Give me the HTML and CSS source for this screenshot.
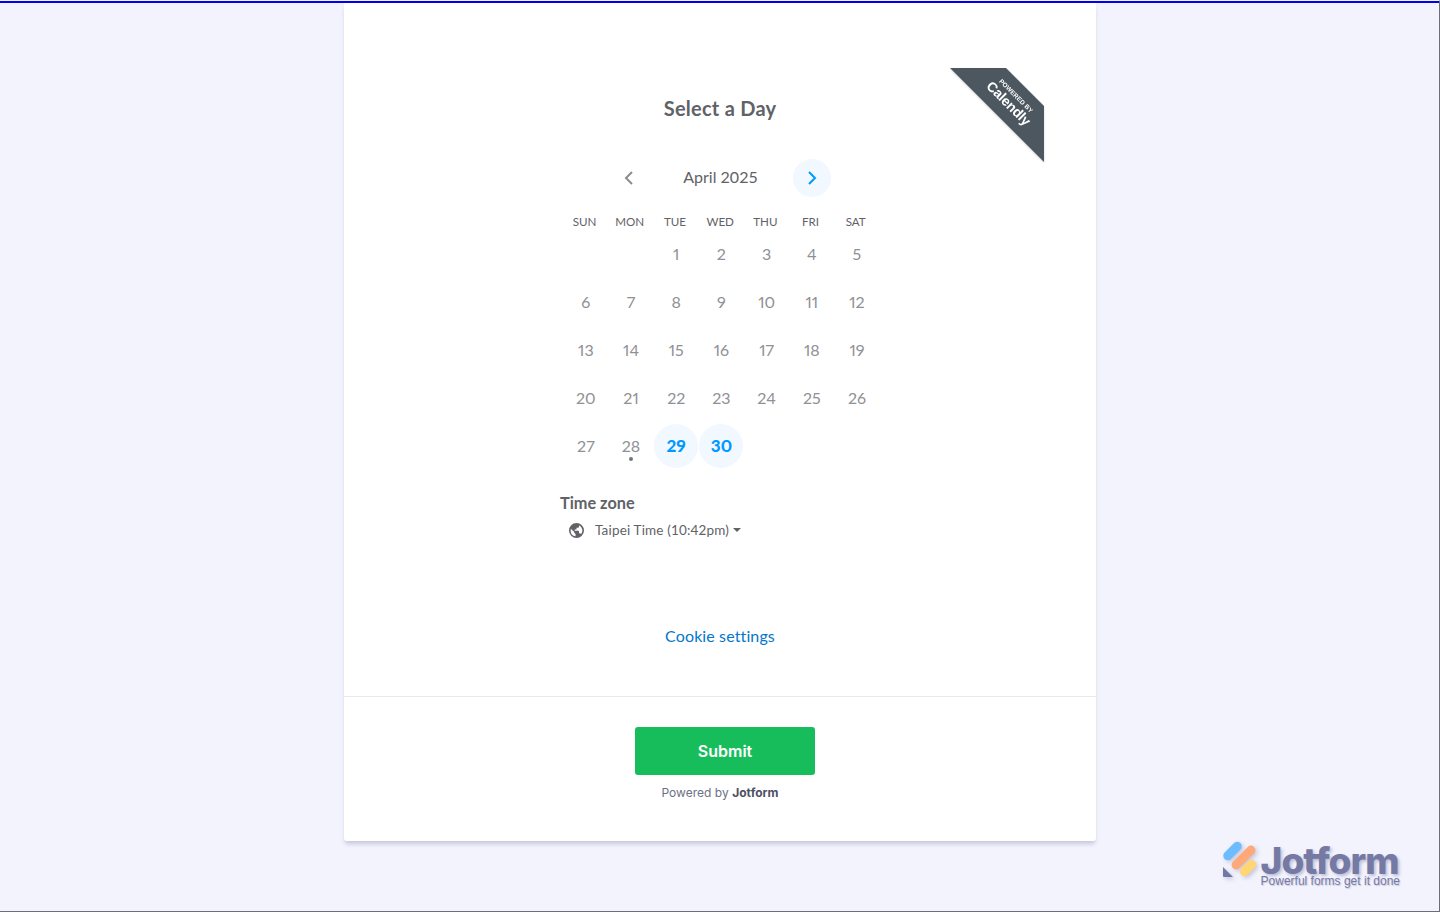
FILE: index.html
```html
<!DOCTYPE html>
<html lang="en">
<head>
<meta charset="utf-8">
<title>Select a Day</title>
<link rel="stylesheet" href="styles.css">
</head>
<body>
<div class="topline"></div>
<main class="card">
  <section class="embed">
    <div class="ribbon" aria-label="Powered by Calendly">
      <svg class="ribbon-bg" width="94" height="94" viewBox="0 0 94 94"><path d="M0 0H56L94 38V94Z" fill="#4d5760"/></svg>
      <div class="ribbon-text"><span class="rib-small">POWERED BY</span><span class="rib-big">Calendly</span></div>
    </div>
    <h1 class="title">Select a Day</h1>
    <div class="month-nav">
      <button class="nav-btn" aria-label="Previous month">
        <svg width="10" height="14" viewBox="0 0 10 14"><path d="M8 1L2 7l6 6" fill="none" stroke="#8a8c90" stroke-width="2"/></svg>
      </button>
      <span class="month">April 2025</span>
      <button class="nav-btn active" aria-label="Next month">
        <svg width="10" height="14" viewBox="0 0 10 14"><path d="M2 1l6 6-6 6" fill="none" stroke="#0099ff" stroke-width="2"/></svg>
      </button>
    </div>
    <div class="weekdays">
      <span>SUN</span><span>MON</span><span>TUE</span><span>WED</span><span>THU</span><span>FRI</span><span>SAT</span>
    </div>
    <div class="days">
      <span></span><span></span><span>1</span><span>2</span><span>3</span><span>4</span><span>5</span>
      <span>6</span><span>7</span><span>8</span><span>9</span><span>10</span><span>11</span><span>12</span>
      <span>13</span><span>14</span><span>15</span><span>16</span><span>17</span><span>18</span><span>19</span>
      <span>20</span><span>21</span><span>22</span><span>23</span><span>24</span><span>25</span><span>26</span>
      <span>27</span><span class="today">28</span><span class="open">29</span><span class="open">30</span>
    </div>
    <div class="tz">
      <h2 class="tz-title">Time zone</h2>
      <div class="tz-row">
        <svg class="globe" width="15" height="15" viewBox="0 0 24 24"><path fill="#5f6267" d="M12 0a12 12 0 1 0 0 24 12 12 0 0 0 0-24zM2.600 12c0-1 .2-2 .5-2.900L5 11l2 2 1 .4.4 2 2.100 2.100v3.800A9.400 9.400 0 0 1 2.600 12zm16.500 6.100c-.3-.9-1.100-1.600-2.100-1.600h-1v-3c0-.6-.4-1-1-1H9v-2h2c.6 0 1-.4 1-1V7.500h2c1.100 0 2-.9 2-2v-2a9.400 9.400 0 0 1 3.100 14.600z"/></svg>
        <span class="tz-label">Taipei Time (10:42pm)</span>
        <span class="caret"></span>
      </div>
    </div>
    <a class="cookie" href="#">Cookie settings</a>
  </section>
  <footer class="foot">
    <button class="submit">Submit</button>
    <p class="powered">Powered by <b>Jotform</b></p>
  </footer>
</main>
<div class="brand">
  <svg class="brand-mark" width="38" height="38" viewBox="0 0 38 38">
    <rect x="0.300" y="5.500" width="22.400" height="9" rx="4.500" fill="#6cbcff" transform="rotate(-45 11.500 10)"/>
    <rect x="7.500" y="12" width="30" height="9" rx="4.500" fill="#ffa878" transform="rotate(-45 22.500 16.500)"/>
    <rect x="17.500" y="22.500" width="19" height="9" rx="4.500" fill="#ffd671" transform="rotate(-45 27 27)"/>
    <path d="M2 26V35a1 1 0 0 0 1 1h9z" fill="#7277a4"/>
  </svg>
  <div class="brand-text">
    <span class="brand-name">Jotform</span>
    <span class="brand-tag">Powerful forms get it done</span>
  </div>
</div>
</body>
</html>
```
FILE: styles.css
```css
* { box-sizing: border-box; }
html, body { margin: 0; height: 912px; overflow: hidden; }
body {
  background: #f3f3fe;
  border-top: 1px solid #f3f3fe;
  border-right: 1px solid #6d6d75;
  border-bottom: 1px solid #6d6d75;
  font-family: "Lato", "Liberation Sans", sans-serif;
  position: relative;
}
.topline { height: 2px; background: #0000ee; margin-right: -1px; }
.card {
  width: 752px;
  height: 838px;
  margin-left: 344px;
  background: #fff;
  border-radius: 0 0 3px 3px;
  box-shadow: 0 4px 4px -1px rgba(87, 90, 130, .28);
  display: flex;
  flex-direction: column;
}
.embed {
  height: 693px;
  position: relative;
  z-index: 0;
  display: flex;
  flex-direction: column;
  align-items: center;
}
.ribbon { position: absolute; left: 606px; top: 65px; width: 94px; height: 94px; filter: drop-shadow(0 1px 1px rgba(0,0,0,.15)); }
.ribbon-bg { display: block; }
.ribbon-text {
  position: absolute;
  left: 25px;
  top: 22px;
  width: 72px;
  display: flex;
  flex-direction: column;
  align-items: center;
  color: #fff;
  transform: rotate(45deg);
  font-family: "Liberation Sans", sans-serif;
  font-weight: 700;
}
.rib-small { font-size: 6.400px; line-height: 7px; letter-spacing: .1px; }
.rib-big { font-size: 13.800px; line-height: 15px; letter-spacing: -.2px; }
.title {
  margin: 93px 0 0;
  font-size: 20px;
  line-height: 24px;
  font-weight: 700;
  letter-spacing: .25px;
  color: #5f6267;
}
.month-nav {
  margin-top: 39px;
  width: 221px;
  height: 38px;
  margin-left: 1px;
  display: flex;
  justify-content: space-between;
  align-items: center;
}
.nav-btn {
  width: 38px;
  height: 38px;
  padding: 0;
  border: 0;
  border-radius: 50%;
  background: transparent;
  display: flex;
  align-items: center;
  justify-content: center;
}
.nav-btn.active { background: #f1f8ff; }
.month { font-size: 16px; line-height: 20px; padding-bottom: 3px; color: #5f6267; }
.weekdays {
  margin-top: 17px;
  width: 316px;
  display: grid;
  grid-template-columns: repeat(7, 45.200px);
  font-size: 11.600px;
  line-height: 16px;
  color: #5f6267;
  text-align: center;
}
.days {
  margin-top: -1px;
  width: 316px;
  margin-left: 2.500px;
  display: grid;
  grid-template-columns: repeat(7, 45.200px);
  grid-auto-rows: 48px;
  font-size: 16px;
  font-variant-numeric: proportional-nums;
  color: #8f9195;
  text-align: center;
}
.days span { display: flex; align-items: center; justify-content: center; position: relative; }
.today::after {
  content: "";
  position: absolute;
  left: 50%;
  bottom: 8px;
  width: 4px;
  height: 4px;
  margin-left: -2px;
  border-radius: 50%;
  background: #74767b;
}
.days .open { color: #0099ff; font-weight: 900; font-size: 17px; }
.days .open::before {
  content: "";
  position: absolute;
  z-index: -1;
  left: 50%;
  top: 50%;
  width: 44px;
  height: 44px;
  margin: -21px 0 0 -22px;
  border-radius: 50%;
  background: #f1f8ff;
}
.tz { width: 320px; margin-top: 24px; }
.tz-title { margin: 0; font-size: 16.300px; line-height: 20px; font-weight: 700; color: #5f6267; }
.tz-row { margin-top: 7px; margin-left: 9px; display: flex; align-items: center; height: 20px; }
.globe { flex: none; }
.tz-label { margin-left: 11px; font-size: 13.500px; color: #5f6267; letter-spacing: .17px; }
.caret {
  margin-left: 4px;
  border-left: 4px solid transparent;
  border-right: 4px solid transparent;
  border-top: 4px solid #5f6267;
}
.cookie {
  margin-top: 86px;
  font-size: 16px;
  line-height: 20px;
  color: #0676c9;
  text-decoration: none;
  letter-spacing: .12px;
}
.foot {
  flex: 1;
  border-top: 1px solid #e8e8f1;
  display: flex;
  flex-direction: column;
  align-items: center;
}
.submit {
  margin: 30px 0 0 10px;
  width: 180px;
  height: 48px;
  border: 0;
  border-radius: 3px;
  background: #18bd5b;
  color: #fff;
  font: 600 16px "Inter", sans-serif;
}
.powered {
  margin: 10px 0 0;
  font: 400 12px/16px "Inter", sans-serif;
  color: #6c7086;
  letter-spacing: .03px;
}
.powered b { font-weight: 700; color: #4d5065; }
.brand {
  position: absolute;
  right: 39px;
  bottom: 23px;
  display: flex;
  align-items: flex-start;
  gap: 2px;
}
.brand-mark { margin-top: -3px; filter: drop-shadow(2px 2px 2px rgba(90,95,140,.3)); }
.brand-text { display: flex; flex-direction: column; }
.brand-name {
  font: 800 37px/30px "Inter", sans-serif;
  letter-spacing: -1px;
  margin-top: 2px;
  margin-bottom: -2px;
  color: #757aa5;
  text-shadow: 2px 2px 3px rgba(90,95,140,.35);
}
.brand-tag {
  font: 400 12px/14px "Liberation Sans", sans-serif;
  color: #757aa5;
  text-shadow: 1px 1px 1px rgba(90,95,140,.3);
}
```
